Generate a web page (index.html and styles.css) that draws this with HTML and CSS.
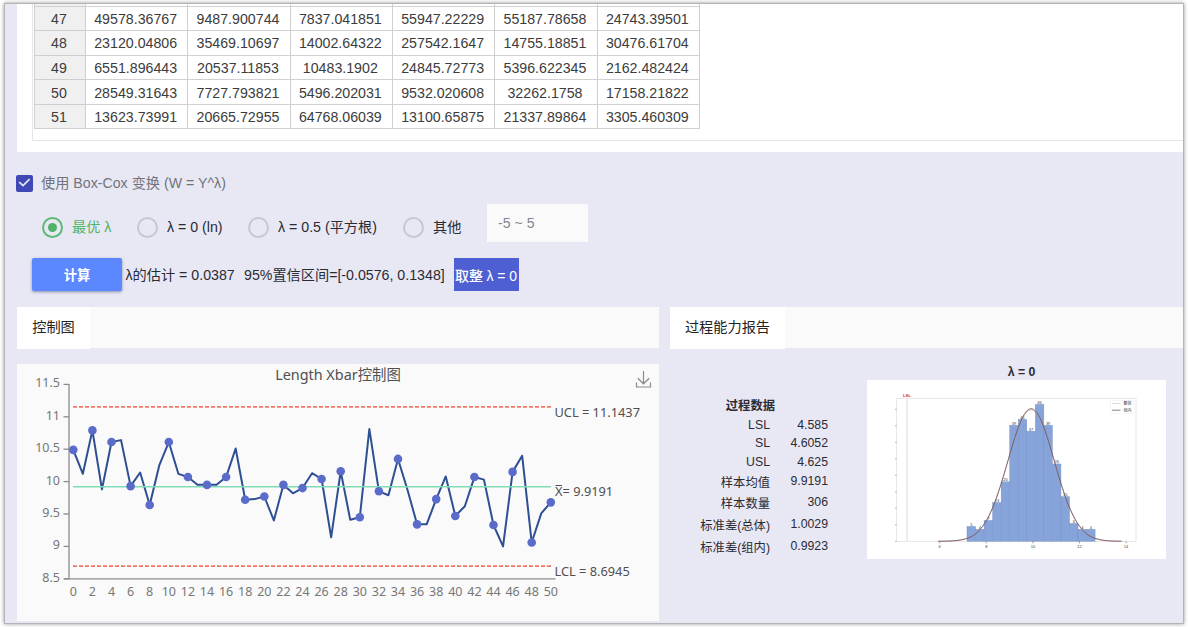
FILE: index.html
```html
<!DOCTYPE html>
<html lang="zh-CN">
<head>
    <meta charset="UTF-8">
    <meta name="viewport" content="width=device-width, initial-scale=1.0">
    <title>Xbar 控制图</title>
    <link rel="stylesheet" href="styles.css">
</head>
<body>
    <div class="frame">
        <div class="sheet-card">
            <div class="sheet-box">
                <table class="sheet">
                    <tr class="cut"><th></th><td></td><td></td><td></td><td></td><td></td><td></td></tr>
                    <tr><th>47</th><td>49578.36767</td><td>9487.900744</td><td>7837.041851</td><td>55947.22229</td><td>55187.78658</td><td>24743.39501</td></tr>
                    <tr><th>48</th><td>23120.04806</td><td>35469.10697</td><td>14002.64322</td><td>257542.1647</td><td>14755.18851</td><td>30476.61704</td></tr>
                    <tr><th>49</th><td>6551.896443</td><td>20537.11853</td><td>10483.1902</td><td>24845.72773</td><td>5396.622345</td><td>2162.482424</td></tr>
                    <tr><th>50</th><td>28549.31643</td><td>7727.793821</td><td>5496.202031</td><td>9532.020608</td><td>32262.1758</td><td>17158.21822</td></tr>
                    <tr><th>51</th><td>13623.73991</td><td>20665.72955</td><td>64768.06039</td><td>13100.65875</td><td>21337.89864</td><td>3305.460309</td></tr>
                </table>
            </div>
        </div>

        <div class="boxcox">
            <span class="checkbox">
                <svg width="17" height="17" viewBox="0 0 17 17"><path d="M3.2 7.2 L7 10.6 L13.6 4.2" fill="none" stroke="#e8e8f6" stroke-width="1.7"/></svg>
            </span>
            <span>使用 Box-Cox 变换 (W = Y^λ)</span>
        </div>

        <div class="options">
            <label class="option on"><span class="radio"></span>最优 λ</label>
            <label class="option opt-ln"><span class="radio"></span>λ = 0 (ln)</label>
            <label class="option opt-sqrt"><span class="radio"></span>λ = 0.5 (平方根)</label>
            <label class="option opt-other"><span class="radio"></span>其他</label>
            <input class="range" type="text" placeholder="-5 ~ 5">
        </div>

        <div class="calc">
            <button class="btn-calc">计算</button>
            <span class="estimate">λ的估计 = 0.0387</span>
            <span class="interval">95%置信区间=[-0.0576, 0.1348]</span>
            <button class="btn-round">取整 λ = 0</button>
        </div>

        <div class="panels">
            <div class="panel">
                <div class="tabs"><div class="tab tab-chart">控制图</div></div>
                <div class="chart-card">
                    <svg id="xbar" class="xbar" width="642" height="257" viewBox="17 364 642 257"></svg>
                </div>
            </div>
            <div class="panel">
                <div class="tabs"><div class="tab tab-report">过程能力报告</div></div>
                <div class="report">
                    <div class="stats">
                        <div class="stats-title">过程数据</div>
                        <div class="stat"><span>LSL</span><b>4.585</b></div>
                        <div class="stat"><span>SL</span><b>4.6052</b></div>
                        <div class="stat"><span>USL</span><b>4.625</b></div>
                        <div class="stat tall"><span>样本均值</span><b>9.9191</b></div>
                        <div class="stat tall"><span>样本数量</span><b>306</b></div>
                        <div class="stat tall"><span>标准差(总体)</span><b>1.0029</b></div>
                        <div class="stat tall"><span>标准差(组内)</span><b>0.9923</b></div>
                    </div>
                    <div class="hist-wrap">
                        <div class="hist-title">λ = 0</div>
                        <svg id="hist" class="hist" width="299" height="179" viewBox="0 0 299 179"></svg>
                    </div>
                </div>
            </div>
        </div>
    </div>
    <script src="charts.js"></script>
</body>
</html>
```
FILE: styles.css
```css
* {
    box-sizing: border-box;
}
body {
    margin: 0;
    height: 627px;
    overflow: hidden;
    background-color: #fff;
    font-family: "Liberation Sans", Arial, "Noto Sans CJK SC", sans-serif;
    color: #2b2b33;
}
.frame {
    width: 1178px;
    height: 619px;
    margin: 4px 0 0 5px;
    overflow: hidden;
    background-color: #e8e8f5;
    box-shadow: 0 0 0 1px #b4b4b6, 0 0 4px 1px #999;
}

/* data sheet */
.sheet-card {
    height: 148px;
    margin-left: 12px;
    padding-left: 15px;
    background-color: #fff;
}
.sheet-box {
    height: 137px;
    border-left: 1px solid #e6e6e6;
    border-bottom: 1px solid #e6e6e6;
    padding-left: 1px;
}
.sheet {
    width: 666px;
    table-layout: fixed;
    border-collapse: collapse;
    font-size: 14.2px;
    color: #3c3c3c;
}
.sheet th,
.sheet td {
    height: 24.6px;
    padding: 1px 2px 0 0;
    border: 1px solid #d0d0d0;
    text-align: center;
    font-weight: normal;
    line-height: 22px;
}
.sheet th {
    width: 51px;
    background-color: #f0f0f0;
}
.sheet .cut th,
.sheet .cut td {
    height: 2px;
    padding: 0;
    border-top: none;
}

/* box-cox settings */
.boxcox {
    display: flex;
    align-items: center;
    height: 24px;
    margin: 19px 0 0 11px;
    font-size: 14.2px;
    line-height: 18px;
    color: #73737b;
}
.checkbox {
    width: 17px;
    height: 17px;
    margin-right: 8px;
    border-radius: 2px;
    background-color: #3f48b5;
}
.checkbox svg {
    display: block;
}
.options {
    display: flex;
    align-items: center;
    height: 38px;
    margin: 9px 0 0 37px;
    font-size: 14.2px;
}
.option {
    display: flex;
    align-items: center;
    height: 22px;
    margin-top: 8px;
    line-height: 20px;
    white-space: nowrap;
}
.option.on {
    width: 95px;
    color: #4fb368;
}
.opt-ln {
    width: 111px;
}
.opt-sqrt {
    width: 155px;
}
.opt-other {
    width: 84px;
}
.radio {
    display: flex;
    align-items: center;
    justify-content: center;
    width: 21px;
    height: 21px;
    margin-right: 9px;
    border: 2px solid #c8c8cc;
    border-radius: 50%;
}
.on .radio {
    border-color: #5db975;
}
.on .radio::after {
    content: "";
    width: 9px;
    height: 9px;
    border-radius: 50%;
    background-color: #4fb368;
}
.range {
    width: 101px;
    height: 38px;
    padding: 0 11px;
    border: none;
    background-color: #fafafb;
    font: 14.2px "Liberation Sans", Arial, sans-serif;
}
.range::placeholder {
    color: #85858a;
}
.calc {
    display: flex;
    align-items: center;
    height: 33px;
    margin: 16px 0 0 27px;
    font-size: 14.2px;
    line-height: 20px;
    white-space: nowrap;
}
.btn-calc {
    width: 90px;
    height: 33px;
    margin-right: 3.5px;
    padding: 0;
    border: none;
    border-radius: 2px;
    background-color: #5c88ff;
    box-shadow: 0 1px 3px rgba(40, 50, 100, 0.5);
    color: #fff;
    font: bold 13.3px "Noto Sans CJK SC", sans-serif;
}
.estimate {
    width: 118.5px;
}
.interval {
    width: 210px;
}
.btn-round {
    width: 65px;
    height: 33px;
    padding: 0 0 0 1px;
    border: none;
    background-color: #4d5fd3;
    color: #fff;
    font: 500 14px "Liberation Sans", Arial, "Noto Sans CJK SC", sans-serif;
    letter-spacing: -0.1px;
    text-align: left;
    white-space: nowrap;
    overflow: hidden;
}

/* result panels */
.panels {
    display: grid;
    grid-template-columns: 642px 514px;
    column-gap: 11px;
    margin: 16px 0 0 12px;
}
.tabs {
    height: 41px;
    background-color: #fafafa;
}
.tab {
    height: 42px;
    background-color: #fff;
    font-size: 14.2px;
    line-height: 41px;
    text-align: center;
    color: #222;
}
.tab-chart {
    width: 73px;
}
.tab-report {
    width: 115px;
}
.chart-card {
    height: 257px;
    margin-top: 16px;
    background-color: #fafafa;
}
.xbar {
    display: block;
    font-family: "Noto Sans", "Noto Sans CJK SC", sans-serif;
    font-size: 12.5px;
}
.xbar .tick {
    fill: #777;
}
.xbar .note {
    font-size: 12.8px;
    fill: #505050;
}
.xbar .title {
    font-size: 14.4px;
    fill: #505050;
}
.report {
    display: flex;
}
.stats {
    width: 158px;
    margin-right: 39px;
    padding-top: 49px;
    font-size: 12.3px;
}
.stats-title {
    height: 19px;
    padding-right: 53px;
    text-align: right;
    font-weight: bold;
    line-height: 19px;
}
.stat {
    display: flex;
    justify-content: flex-end;
    height: 18.3px;
    line-height: 18.3px;
}
.stat b {
    width: 58px;
    text-align: right;
    font-weight: normal;
}
.stat.tall {
    height: 21.6px;
}
.stat.tall span {
    line-height: 25px;
}
.stat.tall b {
    line-height: 21px;
}
.hist-wrap {
    width: 299px;
    padding-top: 16px;
}
.hist-title {
    height: 16px;
    padding-left: 10px;
    font-size: 12.3px;
    font-weight: bold;
    line-height: 17px;
    text-align: center;
}
.hist {
    display: block;
    background-color: #fff;
    font-family: "Liberation Sans", Arial, "Noto Sans CJK SC", sans-serif;
    font-size: 4px;
}
```
FILE: charts.js
```js
var NS = 'http://www.w3.org/2000/svg';

function add(svg, name, attrs, text) {
    var el = document.createElementNS(NS, name);
    for (var key in attrs) {
        el.setAttribute(key, attrs[key]);
    }
    if (text !== undefined) {
        el.textContent = text;
    }
    svg.appendChild(el);
    return el;
}

function line(svg, x1, y1, x2, y2, stroke, width, dash) {
    var el = add(svg, 'line', { x1: x1, y1: y1, x2: x2, y2: y2, stroke: stroke, 'stroke-width': width || 1 });
    if (dash) {
        el.setAttribute('stroke-dasharray', dash);
    }
}

// Xbar control chart
function drawXbar() {
    var svg = document.getElementById('xbar');
    var means = [
        10.49, 10.12, 10.79, 9.88, 10.61, 10.64, 9.93, 10.14, 9.64, 10.25,
        10.61, 10.12, 10.07, 9.95, 9.95, 9.95, 10.07, 10.51, 9.72, 9.73,
        9.77, 9.40, 9.95, 9.82, 9.90, 10.13, 10.04, 9.14, 10.16, 9.41,
        9.45, 10.81, 9.85, 9.79, 10.35, 9.87, 9.34, 9.34, 9.73, 10.08,
        9.47, 9.62, 10.07, 10.03, 9.33, 9.00, 10.15, 10.40, 9.06, 9.51, 9.68
    ];
    var x = function (i) { return 73.3 + i * 9.55; };
    var y = function (v) { return 384.4 + (11.5 - v) * 64.8; };

    line(svg, 69, 384, 69, 579, '#8c8c90', 1.3);
    line(svg, 64, 578.8, 555.5, 578.8, '#8c8c90', 1.3);
    for (var v = 8.5; v <= 11.5; v += 0.5) {
        line(svg, 63.5, y(v), 69, y(v), '#8c8c90', 1.3);
        add(svg, 'text', { x: 60, y: y(v) + 3, 'text-anchor': 'end', 'class': 'tick' }, v);
    }
    for (var i = 0; i <= 50; i += 2) {
        add(svg, 'text', { x: x(i), y: 596.3, 'text-anchor': 'middle', 'class': 'tick' }, i);
    }

    add(svg, 'polyline', {
        points: means.map(function (m, i) { return x(i) + ',' + y(m); }).join(' '),
        fill: 'none', stroke: '#2e4f92', 'stroke-width': 2, 'stroke-linejoin': 'round'
    });
    line(svg, 73, 406.9, 551, 406.9, '#f07a68', 1.6, '4 2');
    line(svg, 73, 486.7, 551, 486.7, '#7fdcb4', 1.6);
    line(svg, 73, 566.1, 551, 566.1, '#f07a68', 1.6, '4 2');
    means.forEach(function (m, i) {
        if (i % 2 === 0) {
            add(svg, 'circle', { cx: x(i), cy: y(m), r: 4.3, fill: '#5b6bc9' });
        }
    });

    add(svg, 'text', { x: 338, y: 380, 'text-anchor': 'middle', 'class': 'title' }, 'Length Xbar控制图');
    add(svg, 'text', { x: 554.5, y: 417, 'class': 'note' }, 'UCL = 11.1437');
    add(svg, 'text', { x: 555, y: 496, 'class': 'note' }, 'X= 9.9191');
    line(svg, 555.5, 485.5, 562, 485.5, '#505050', 1);
    add(svg, 'text', { x: 554.5, y: 576, 'class': 'note' }, 'LCL = 8.6945');

    // download icon
    add(svg, 'path', {
        d: 'M643.5 371 V383.6 M637.8 378.2 L643.5 383.8 L649.2 378.2 M636.5 382.5 V387 H650.5 V382.5',
        fill: 'none', stroke: '#8a8a8e', 'stroke-width': 1.2
    });
}

// histogram with the fitted normal curves
function drawHist() {
    var svg = document.getElementById('hist');
    var counts = [5, 4, 7, 13, 20, 39, 41, 37, 46, 39, 26, 15, 6, 4, 4];
    var base = 161.3;
    var unit = 2.975;
    var step = 8.54;

    add(svg, 'rect', { x: 29.7, y: 18.4, width: 239.3, height: 142.9, fill: 'none', stroke: '#dddddb', 'stroke-width': 0.7 });
    line(svg, 40, 18.4, 40, base, '#f0e9e8', 1.8);
    add(svg, 'text', { x: 39.8, y: 17.2, 'text-anchor': 'middle', fill: '#c02c48', 'font-weight': 'bold' }, 'LSL');

    counts.forEach(function (n, i) {
        var left = 100 + i * step;
        var top = base - n * unit;
        add(svg, 'rect', { x: left, y: top, width: step, height: n * unit, fill: '#87a4da', stroke: '#708dc4', 'stroke-width': 0.4 });
        add(svg, 'text', { x: left + step / 2, y: top - 0.7, 'text-anchor': 'middle', fill: '#333' }, n);
    });

    function curve(sigma, peak, color) {
        var pts = [];
        for (var z = -4; z <= 4; z += 0.1) {
            pts.push((164.1 + z * sigma).toFixed(2) + ',' + (base - peak * Math.exp(-z * z / 2)).toFixed(2));
        }
        add(svg, 'polyline', { points: pts.join(' '), fill: 'none', stroke: color, 'stroke-width': 0.7 });
    }
    curve(23.4, 131.6, '#d19a8c');
    curve(23.15, 132.7, '#54434f');

    for (var i = 0; i < 5; i++) {
        line(svg, 72.7 + i * 46.6, base, 72.7 + i * 46.6, base + 2, '#777', 0.7);
        add(svg, 'text', { x: 72.7 + i * 46.6, y: 167.5, 'text-anchor': 'middle', fill: '#444' }, 6 + i * 2);
    }
    for (var k = 0; k < 9; k++) {
        line(svg, 28, base - k * 16.5, 29.7, base - k * 16.5, '#999', 0.7);
    }

    add(svg, 'rect', { x: 243.5, y: 20.5, width: 23.5, height: 13, fill: 'none', stroke: '#eee', 'stroke-width': 0.6 });
    line(svg, 245, 23.5, 253.5, 23.5, '#cfc8c6', 0.7);
    line(svg, 245, 30.2, 253.5, 30.2, '#54434f', 0.7);
    add(svg, 'text', { x: 256.5, y: 25, fill: '#333' }, '整体');
    add(svg, 'text', { x: 256.5, y: 31.7, fill: '#333' }, '组内');
}

drawXbar();
drawHist();
```
